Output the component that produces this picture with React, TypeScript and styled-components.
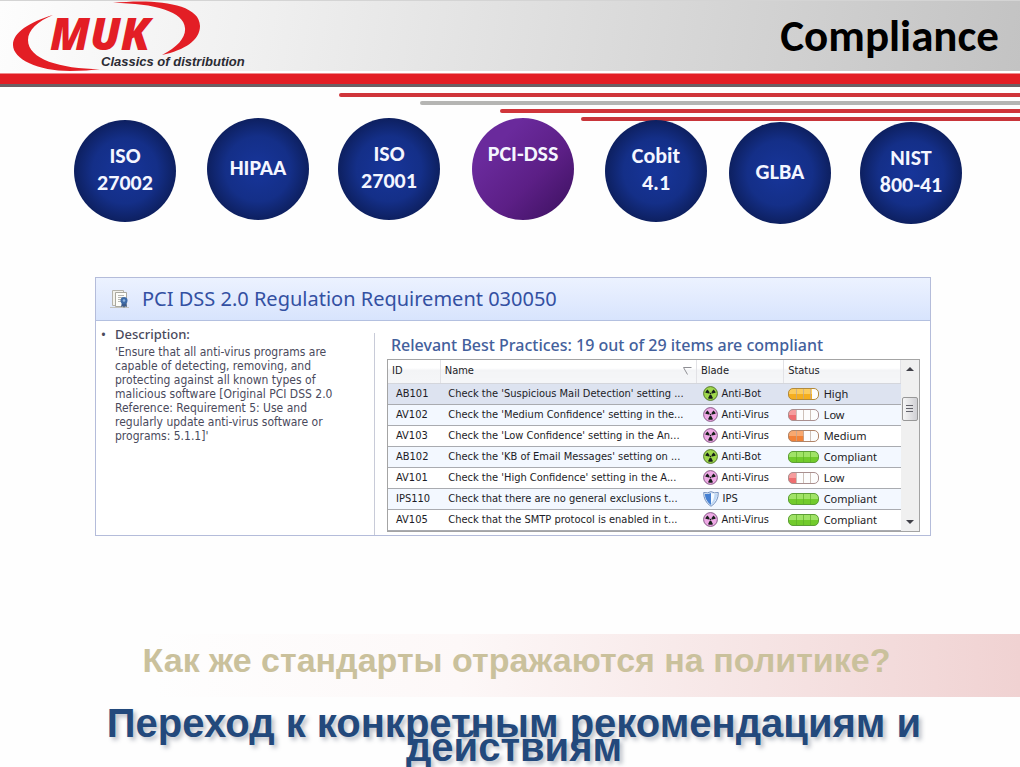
import React from 'react';
import styled, { createGlobalStyle } from 'styled-components';

const heading = '"Carlito", "Lato", "Open Sans", sans-serif';
const humanist = '"Noto Sans", "Open Sans", sans-serif';
const compact = '"DejaVu Sans Condensed", "DejaVu Sans", sans-serif';
const grotesque = '"Liberation Sans", Arial, sans-serif';

const GlobalStyle = createGlobalStyle`
  * { box-sizing: border-box; }
  body { margin: 0; background: #fefefe; }
  h1, h2, h3, p, ul { margin: 0; padding: 0; font-weight: inherit; }
`;

const Slide = styled.main`
  min-height: 100vh;
  overflow: hidden;
  font-family: ${humanist};
`;

const Header = styled.header`
  display: flex;
  align-items: center;
  justify-content: space-between;
  height: 71px;
  padding: 0 21px 0 0;
  border-top: 1px solid #d4d4d4;
  background: linear-gradient(100deg, #fdfdfd 0%, #f0f0f0 25%, #dcdcdc 58%, #c3c3c3 100%);
`;

const LogoArt = styled.svg`
  display: block;
  flex: none;
`;

const LogoName = styled.text`
  font: italic 800 44px "Open Sans", sans-serif;
  fill: #e31e25;
`;

const LogoTagline = styled.text`
  font: italic 700 13px ${grotesque};
  fill: #2b2b33;
`;

const Title = styled.h1`
  font: 700 45px/48px ${heading};
  color: #000;
`;

const RedBand = styled.div`
  height: 14px;
  margin-top: 2px;
  border-top: 1px solid #f08a8c;
  border-bottom: 3px solid #6c6064;
  background: #e31e25;
`;

const Stripes = styled.div`
  display: grid;
  gap: 4px;
  padding-top: 6px;
`;

const Stripe = styled.div<{ $start: string; $color: string }>`
  height: 4px;
  margin-left: ${(p) => p.$start};
  border-radius: 2px 0 0 2px;
  background: ${(p) => p.$color};
`;

const Standards = styled.ul`
  position: relative;
  display: grid;
  grid-template-columns: 133fr 131fr 134fr 133fr 124fr 131fr 102px;
  height: 106px;
  margin-top: -3px;
  padding: 0 58px 0 74px;
  list-style: none;
`;

const Standard = styled.li<{ $active?: boolean; $align?: string }>`
  display: flex;
  align-items: center;
  justify-content: center;
  align-self: ${(p) => p.$align ?? 'start'};
  width: 102px;
  height: 102px;
  padding-bottom: 4px;
  border-radius: 50%;
  background: ${(p) =>
    p.$active
      ? 'linear-gradient(135deg, #6a2a9c 25%, #5c1f86 60%, #3e1262 95%)'
      : 'radial-gradient(circle, #17359a 0%, #142f88 45%, #0d1f5e 72%)'};
  color: #f4f6ff;
  font: 700 22px/27px ${heading};
  text-align: center;
  white-space: pre;
`;

const Panel = styled.section`
  margin: 53px 89px 0 95px;
  border: 1px solid #b4bcda;
  background: #fff;
`;

const PanelHeader = styled.div`
  display: flex;
  align-items: center;
  gap: 12px;
  height: 43px;
  padding: 0 14px;
  border-bottom: 1px solid #b3c0e0;
  background: linear-gradient(#ecf2ff, #d8e4fd);
`;

const PanelTitle = styled.h2`
  font-size: 20px;
  line-height: 26px;
  font-weight: 400;
  color: #3350a2;
`;

const PanelBody = styled.div`
  display: grid;
  grid-template-columns: 278px 1fr;
  height: 214px;
`;

const Description = styled.div`
  padding: 3px 20px 0 5px;
  color: #4a4a5c;
  font-weight: 500;
`;

const DescriptionTitle = styled.h3`
  display: flex;
  gap: 8px;
  font-size: 13px;
  line-height: 20px;

  &::before {
    content: '•';
    width: 6px;
  }
`;

const DescriptionText = styled.p`
  padding: 1px 0 0 14px;
  font: 12px/14px ${compact};
`;

const Practices = styled.div`
  margin-top: 12px;
  padding: 0 10px 0 12px;
  border-left: 1px solid #c8cbd8;
`;

const PracticesTitle = styled.h3`
  padding: 0 4px 2px;
  font-size: 16px;
  line-height: 24px;
  font-weight: 500;
  color: #43609c;
`;

const ListBox = styled.div`
  display: flex;
  border: 1px solid #a4a4a4;
  background: #fff;
`;

const Table = styled.table`
  flex: 1;
  min-width: 0;
  table-layout: fixed;
  border-collapse: collapse;
  font: 11px/14px ${compact};
  color: #1c1c26;
`;

const HeadCell = styled.th<{ $width: string }>`
  width: ${(p) => p.$width};
  height: 23px;
  padding: 0 4px;
  border-right: 1px solid #e2e2e6;
  border-bottom: 1px solid #d4d6dc;
  background: linear-gradient(#fff 35%, #f3f4f6 45%, #f5f6f8);
  font-weight: 400;
  text-align: left;
`;

const HeadContent = styled.span`
  display: flex;
  align-items: center;
  justify-content: space-between;
`;

const Row = styled.tr<{ $selected?: boolean }>`
  background: #fff;
  border-bottom: 1px solid #a9abb0;

  &:nth-child(even) { background: #f3f8ff; }
  ${(p) => p.$selected && '&& { background: #dde3f0; }'}
`;

const Cell = styled.td<{ $inset?: number }>`
  height: 21px;
  padding: 0 0 0 ${(p) => p.$inset ?? 8}px;
  white-space: nowrap;
`;

const IconLine = styled.span<{ $status?: boolean }>`
  display: flex;
  align-items: center;
  gap: ${(p) => (p.$status ? 5 : 4)}px;
  ${(p) => p.$status && `font-family: ${humanist};`}
`;

const ScrollTrack = styled.div`
  display: flex;
  flex-direction: column;
  width: 18px;
  background: #f0f0f0;
`;

const ScrollButton = styled.button`
  display: grid;
  place-items: center;
  height: 18px;
  padding: 0;
  border: 0;
  background: transparent;
`;

const ScrollThumb = styled.button`
  display: grid;
  place-items: center;
  width: 16px;
  height: 24px;
  margin: 19px 1px auto;
  padding: 0;
  border: 1px solid #989898;
  border-radius: 2px;
  background: linear-gradient(90deg, #f6f6f6, #d0d0d4);
`;

const Question = styled.p`
  margin-top: 98px;
  padding: 6px 0 17px 13px;
  background: linear-gradient(90deg, #fefefe 15%, #fdf8f8 45%, #f6e4e4 75%, #f0d2d2 100%);
  color: #cac19c;
  font: 700 34px/40px ${grotesque};
  text-align: center;
`;

const Answer = styled.p`
  margin: 14px 0 0;
  padding: 0 96px 0 104px;
  color: #23497c;
  font: 700 40px/24px ${grotesque};
  text-align: center;
  text-shadow: 3px 3px 4px rgba(90, 100, 120, 0.4);
`;

function Logo() {
  return (
    <LogoArt width="260" height="70" viewBox="0 1 260 70" role="img" aria-label="MUK">
      <g fill="#e31e25">
        <path d="M53 15C30 22 13 32 13 45C13 59 38 71 70 71C82 71 92 70 100 69C60 69 28 59 28 40C28 30 38 21 53 15Z" />
        <path d="M113 3C150 -1 200 2 200 26C200 40 185 50 162 55C178 47 186 37 185 28C184 12 155 3 113 3Z" />
      </g>
      <LogoName x="50" y="50">MUK</LogoName>
      <LogoTagline x="101" y="66">Classics of distribution</LogoTagline>
    </LogoArt>
  );
}

function CertificateIcon() {
  return (
    <svg width="20" height="20" viewBox="0 0 20 20" aria-hidden="true">
      <path d="M0 18.500h19" stroke="#c2c2bd" />
      <path d="M2.500 1.500h11v15h-11z" fill="#f3f2ec" stroke="#b5b3aa" />
      <path d="M5.500 3.500h11v14h-11z" fill="#fdfdf9" stroke="#aaa89f" />
      <path d="M8 6.500h6M8 8.500h5M8 10.500h3M8 12.500h3" stroke="#b7b7b2" />
      <path d="M12 13l-1 5 2-1 1 2 1-2 2 1-1-5z" fill="#3b5b8c" />
      <circle cx="14" cy="11.500" r="3.500" fill="#3e6ba8" />
      <circle cx="14" cy="11.500" r="1.300" fill="#8fb4de" />
    </svg>
  );
}

function RadiationIcon({ color, edge }: { color: string; edge: string }) {
  return (
    <svg width="15" height="15" viewBox="0 0 15 15" aria-hidden="true">
      <circle cx="7.500" cy="7.500" r="6.900" fill={color} stroke={edge} strokeWidth="1" />
      <g fill="#17201a">
        <path d="M6.600 6.300L4.600 3.400C3.300 4.200 2.600 5.300 2.400 6.800L5.900 7.500Z" />
        <path d="M8.400 6.300L10.400 3.400C11.700 4.200 12.400 5.300 12.600 6.800L9.100 7.500Z" />
        <path d="M6.600 9L5 12.200C6.600 13 8.400 13 10 12.200L8.400 9Z" />
        <circle cx="7.500" cy="7.600" r=".9" />
      </g>
    </svg>
  );
}

function ShieldIcon() {
  return (
    <svg width="16" height="16" viewBox="0 0 16 16" aria-hidden="true">
      <path d="M.7 1.500Q4.500 2.500 8 .7Q11.500 2.500 15.300 1.500Q15.500 10.500 8 15.300Q.5 10.500 .7 1.500Z" fill="#e6f0fb" stroke="#7591bd" />
      <path d="M1.800 2.700Q5 3.300 8 2V14Q2 9.500 1.800 2.700Z" fill="#4580d2" />
      <path d="M8 2Q11 3.300 14.200 2.700Q14 9.500 8 14Z" fill="#bcd7f5" />
      <path d="M8 2Q10 3 11.500 2.900Q11 9.500 8 12.500Z" fill="#f5faff" />
    </svg>
  );
}

const levels = {
  High: { filled: 3, color: '#f6ae1e', light: '#ffd978', edge: '#b28a3c' },
  Low: { filled: 1, color: '#ee6e70', light: '#f9b0b0', edge: '#a98f8f' },
  Medium: { filled: 2, color: '#f28238', light: '#fbb888', edge: '#b08468' },
  Compliant: { filled: 4, color: '#72cb2c', light: '#b4ec80', edge: '#5d9e37' },
};
type Level = keyof typeof levels;

function Gauge({ level }: { level: Level }) {
  const { filled, color, light, edge } = levels[level];
  const width = [0, 8, 16, 24, 30][filled];
  const clip = `gauge-${level}`;
  return (
    <svg width="31" height="12" viewBox="0 0 31 12" aria-hidden="true">
      <clipPath id={clip}>
        <rect x=".5" y=".5" width="30" height="11" rx="4.500" />
      </clipPath>
      <g clipPath={`url(#${clip})`}>
        <rect width="31" height="12" fill="#fdfdfd" />
        <rect width={width} height="12" fill={color} />
        <rect width={width} height="5" y="1" fill={light} opacity=".7" />
        <path d="M8.500 1v10M15.500 1v10M22.500 1v10" stroke={filled === 4 ? '#5fae28' : '#b9a79c'} opacity=".7" />
      </g>
      <rect x=".5" y=".5" width="30" height="11" rx="4.500" fill="none" stroke={edge} />
    </svg>
  );
}

type Blade = 'Anti-Bot' | 'Anti-Virus' | 'IPS';

function BladeIcon({ blade }: { blade: Blade }) {
  if (blade === 'IPS') return <ShieldIcon />;
  return blade === 'Anti-Bot' ? (
    <RadiationIcon color="#9fd84c" edge="#55772e" />
  ) : (
    <RadiationIcon color="#efa9e6" edge="#865d86" />
  );
}

const standards = [
  { name: 'ISO\n27002', align: 'center' },
  { name: 'HIPAA' },
  { name: 'ISO\n27001' },
  { name: 'PCI-DSS\n\u00a0', active: true },
  { name: 'Cobit\n4.1', align: 'center' },
  { name: 'GLBA', align: 'end' },
  { name: 'NIST\n800-41', align: 'end' },
];

const practices: { id: string; name: string; blade: Blade; status: Level }[] = [
  { id: 'AB101', name: "Check the 'Suspicious Mail Detection' setting ...", blade: 'Anti-Bot', status: 'High' },
  { id: 'AV102', name: "Check the 'Medium Confidence' setting in the...", blade: 'Anti-Virus', status: 'Low' },
  { id: 'AV103', name: "Check the 'Low Confidence' setting in the An...", blade: 'Anti-Virus', status: 'Medium' },
  { id: 'AB102', name: "Check the 'KB of Email Messages' setting on ...", blade: 'Anti-Bot', status: 'Compliant' },
  { id: 'AV101', name: "Check the 'High Confidence' setting in the A...", blade: 'Anti-Virus', status: 'Low' },
  { id: 'IPS110', name: 'Check that there are no general exclusions t...', blade: 'IPS', status: 'Compliant' },
  { id: 'AV105', name: 'Check that the SMTP protocol is enabled in t...', blade: 'Anti-Virus', status: 'Compliant' },
];

export default function App() {
  return (
    <Slide>
      <GlobalStyle />
      <Header>
        <Logo />
        <Title>Compliance</Title>
      </Header>
      <RedBand />
      <Stripes>
        <Stripe $start="33.2%" $color="#d0353a" />
        <Stripe $start="41.2%" $color="#b5b5b3" />
        <Stripe $start="49%" $color="#d0353a" />
        <Stripe $start="57%" $color="#c9353a" />
      </Stripes>
      <Standards>
        {standards.map((s) => (
          <Standard key={s.name} $active={s.active} $align={s.align}>
            {s.name}
          </Standard>
        ))}
      </Standards>
      <Panel>
        <PanelHeader>
          <CertificateIcon />
          <PanelTitle>PCI DSS 2.0 Regulation Requirement 030050</PanelTitle>
        </PanelHeader>
        <PanelBody>
          <Description>
            <DescriptionTitle>Description:</DescriptionTitle>
            <DescriptionText>
              'Ensure that all anti-virus programs are
              <br />
              capable of detecting, removing, and
              <br />
              protecting against all known types of
              <br />
              malicious software [Original PCI DSS 2.0
              <br />
              Reference: Requirement 5: Use and
              <br />
              regularly update anti-virus software or
              <br />
              programs: 5.1.1]'
            </DescriptionText>
          </Description>
          <Practices>
            <PracticesTitle>Relevant Best Practices: 19 out of 29 items are compliant</PracticesTitle>
            <ListBox>
              <Table>
                <thead>
                  <tr>
                    <HeadCell $width="10.2%">ID</HeadCell>
                    <HeadCell $width="50%">
                      <HeadContent>
                        Name
                        <svg width="9" height="8" viewBox="0 0 9 8" aria-hidden="true">
                          <path d="M8.500 .5H.5L4.500 7.500" fill="none" stroke="#8f8f94" />
                        </svg>
                      </HeadContent>
                    </HeadCell>
                    <HeadCell $width="17%">Blade</HeadCell>
                    <HeadCell $width="22.800%">Status</HeadCell>
                  </tr>
                </thead>
                <tbody>
                  {practices.map((p, i) => (
                    <Row key={p.id} $selected={i === 0}>
                      <Cell>{p.id}</Cell>
                      <Cell>{p.name}</Cell>
                      <Cell $inset={6}>
                        <IconLine>
                          <BladeIcon blade={p.blade} />
                          {p.blade}
                        </IconLine>
                      </Cell>
                      <Cell $inset={4}>
                        <IconLine $status>
                          <Gauge level={p.status} />
                          {p.status}
                        </IconLine>
                      </Cell>
                    </Row>
                  ))}
                </tbody>
              </Table>
              <ScrollTrack>
                <ScrollButton type="button" aria-label="Scroll up">
                  <svg width="8" height="4" viewBox="0 0 8 4" aria-hidden="true">
                    <path d="M0 4L4 0L8 4Z" fill="#404048" />
                  </svg>
                </ScrollButton>
                <ScrollThumb type="button" aria-label="Scroll position">
                  <svg width="8" height="10" viewBox="0 0 8 10" aria-hidden="true">
                    <path d="M0 1.500h7M0 4.500h7M0 7.500h7" stroke="#63636b" />
                  </svg>
                </ScrollThumb>
                <ScrollButton type="button" aria-label="Scroll down">
                  <svg width="8" height="4" viewBox="0 0 8 4" aria-hidden="true">
                    <path d="M0 0L4 4L8 0Z" fill="#404048" />
                  </svg>
                </ScrollButton>
              </ScrollTrack>
            </ListBox>
          </Practices>
        </PanelBody>
      </Panel>
      <Question>Как же стандарты отражаются на политике?</Question>
      <Answer>Переход к конкретным рекомендациям и действиям</Answer>
    </Slide>
  );
}
